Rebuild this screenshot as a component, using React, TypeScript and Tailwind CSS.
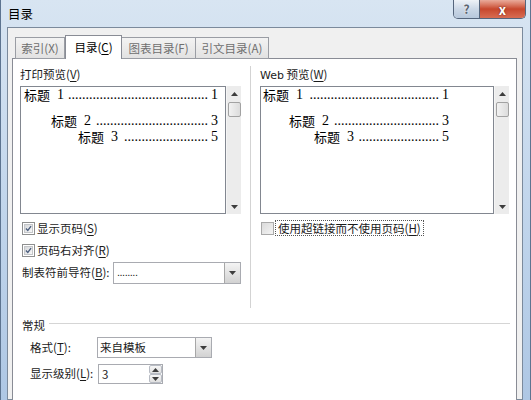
import React from "react";

const cjk = "font-['Noto_Sans_CJK_SC','Microsoft_YaHei',sans-serif]";
const serif = "font-['Liberation_Serif','Times_New_Roman',serif]";

function Acc({ k }: { k: string }) {
  return (
    <>
      (<span className="underline underline-offset-[2px] decoration-[1px]">{k}</span>)
    </>
  );
}

function Check({ checked }: { checked: boolean }) {
  return (
    <span className="w-[13px] h-[13px] shrink-0 border border-[#8e8f8f] bg-white p-px">
      <span className="w-full h-full flex items-center justify-center border border-[#c4c6c9] bg-gradient-to-br from-[#d6d8db] to-[#f7f7f7]">
        {checked && (
          <svg width="9" height="9" viewBox="0 0 9 9">
            <path d="M1.2 4.6 L3.6 7 L7.8 1.4" fill="none" stroke="#4a5d7d" strokeWidth="1.7" />
          </svg>
        )}
      </span>
    </span>
  );
}

function Arrow({ up }: { up?: boolean }) {
  return (
    <svg width="7" height="4" viewBox="0 0 7 4">
      <path d={up ? "M0 4 L3.5 0 L7 4 Z" : "M0 0 L7 0 L3.5 4 Z"} fill="#3d3d3d" />
    </svg>
  );
}

function Scrollbar() {
  return (
    <div className="w-[15px] h-[128px] flex flex-col items-center bg-[#ececec] border-l border-[#f5f5f5]">
      <div className="h-[15px] flex items-center justify-center">
        <Arrow up />
      </div>
      <div className="mt-[1px] w-[13px] h-[15px] rounded-[2px] border border-[#a2a2a2] bg-gradient-to-r from-[#f2f2f2] to-[#dcdcdc]" />
      <div className="flex-1" />
      <div className="h-[15px] flex items-center justify-center">
        <Arrow />
      </div>
    </div>
  );
}

function TocLine({ n, page, dots, cls, numGap }: { n: string; page: string; dots: number; cls: string; numGap: string }) {
  return (
    <div className={`flex items-center h-[16px] ${cls}`}>
      <span className={`${cjk} text-[13px] leading-[16px]`}>标题</span>
      <span className={`${serif} text-[14px] leading-[16px] ml-[7px]`}>{n}</span>
      <span className={`flex-1 flex justify-end overflow-hidden ${numGap}`}>
        <span className={`${serif} text-[14px] leading-[16px] whitespace-nowrap`}>{".".repeat(dots)}</span>
      </span>
      <span className={`${serif} text-[14px] leading-[16px] ml-[3px]`}>{page}</span>
    </div>
  );
}

function DropBtn() {
  return (
    <div className="w-[16px] h-full flex items-center justify-center border-l border-[#a7a7a7] bg-gradient-to-b from-[#f4f4f4] to-[#d2d2d2]">
      <Arrow />
    </div>
  );
}

export default function App() {
  return (
    <div
      className={`w-[531px] h-[400px] overflow-hidden border-x border-[#5d7490] bg-gradient-to-b from-[#d8e5f2] via-[#c2d6ec] to-[#aec7e4] ${cjk} text-[11.5px] text-[#1b1b1b] whitespace-nowrap`}
    >
      {/* title bar */}
      <div className="h-[27px] flex items-start">
        <span className="ml-[7px] mt-[5px] text-[12.5px] leading-[18px] text-black">目录</span>
        <div className="ml-auto mr-[4px] flex rounded-b-[5px] overflow-hidden border border-t-0 border-[#55657c]">
          <div className="w-[26px] h-[18px] flex items-center justify-center border-r border-[#55657c] bg-gradient-to-b from-[#eef2f7] via-[#cbd7e6] to-[#b7c8dc] text-[12px] font-bold text-[#5b6470] [text-shadow:0_0_2px_#fff]">
            ?
          </div>
          <div className="w-[45px] h-[18px] flex items-center justify-center bg-gradient-to-b from-[#e9ab9b] via-[#c7472d] to-[#d86c52] text-[13px] font-bold text-white leading-none [text-shadow:0_0_2px_#5a1a10]">
            x
          </div>
        </div>
      </div>

      {/* dialog body */}
      <div className="ml-[6px] w-[516px] h-[373px] border border-[#7b8a9c] bg-[#f0f0f0] pt-[7px]">
        {/* tabs */}
        <div className="relative z-10 -mb-px ml-[7px] h-[24px] flex items-end">
          <div className="w-[50px] h-[22px] pt-[2px] flex items-center justify-center border border-[#9a9da4] bg-gradient-to-b from-[#f3f3f3] to-[#e2e2e2] text-[#6f6f6f]">
            索引(X)
          </div>
          <div className="w-[57px] h-[24px] flex items-center justify-center border border-b-0 border-[#898c95] bg-white text-black">
            目录<Acc k="C" />
          </div>
          <div className="w-[74px] h-[22px] pt-[2px] flex items-center justify-center border border-l-0 border-[#9a9da4] bg-gradient-to-b from-[#f3f3f3] to-[#e2e2e2] text-[#6f6f6f]">
            图表目录(F)
          </div>
          <div className="w-[73px] h-[22px] pt-[2px] flex items-center justify-center border border-l-0 border-[#9a9da4] bg-gradient-to-b from-[#f3f3f3] to-[#e2e2e2] text-[#6f6f6f]">
            引文目录(A)
          </div>
        </div>

        {/* tab panel */}
        <div className="ml-[4px] mr-[5px] h-[360px] border border-[#898c95] bg-white pt-[7px] pl-[7px] pr-[6px]">
          <div className="flex h-[242px]">
            {/* print preview */}
            <div className="w-[221px] flex flex-col">
              <div className="h-[16px] leading-[16px]">
                打印预览<Acc k="V" />
              </div>
              <div className="mt-[4px] flex">
                <div className="w-[206px] h-[128px] border border-[#828790] bg-white pl-[3px] pr-[7px] text-black">
                  <TocLine n="1" page="1" dots={40} cls="" numGap="ml-[1px]" />
                  <TocLine n="2" page="3" dots={32} cls="ml-[27px] mt-[10px]" numGap="ml-[4px]" />
                  <TocLine n="3" page="5" dots={24} cls="ml-[54px]" numGap="ml-[4px]" />
                </div>
                <Scrollbar />
              </div>
              <div className="mt-[6px] h-[16px] pl-[2px] flex items-center gap-[2px]">
                <Check checked />
                <span className="leading-[16px]">
                  显示页码<Acc k="S" />
                </span>
              </div>
              <div className="mt-[6px] h-[16px] pl-[2px] flex items-center gap-[2px]">
                <Check checked />
                <span className="leading-[16px]">
                  页码右对齐<Acc k="R" />
                </span>
              </div>
              <div className="mt-[4px] h-[22px] pl-[2px] flex items-center">
                <span className="w-[91px] shrink-0">
                  制表符前导符<Acc k="B" />:
                </span>
                <div className="w-[128px] h-[22px] flex border border-[#a9abb1] bg-white">
                  <span className="flex-1 pl-[3px] leading-[18px] tracking-[-0.5px] font-['Liberation_Sans',sans-serif] text-[11px]">
                    ........
                  </span>
                  <DropBtn />
                </div>
              </div>
            </div>

            {/* divider */}
            <div className="ml-[9px] w-px bg-[#d3d3d3]" />

            {/* web preview */}
            <div className="ml-[9px] w-[249px] flex flex-col">
              <div className="h-[16px] leading-[16px]">
                <span className="font-['DejaVu_Sans',sans-serif] text-[11px]">Web</span> 预览<Acc k="W" />
              </div>
              <div className="mt-[4px] flex">
                <div className="w-[234px] h-[128px] border border-[#828790] bg-white pl-[2px] pr-[44px] text-black">
                  <TocLine n="1" page="1" dots={37} cls="" numGap="ml-[1px]" />
                  <TocLine n="2" page="3" dots={30} cls="ml-[26px] mt-[10px]" numGap="ml-[1px]" />
                  <TocLine n="3" page="5" dots={23} cls="ml-[51px]" numGap="ml-[1px]" />
                </div>
                <Scrollbar />
              </div>
              <div className="mt-[6px] h-[16px] pl-[1px] flex items-center">
                <span className="w-[13px] h-[13px] shrink-0 border border-[#a9a9a9] bg-gradient-to-br from-[#dadada] to-[#f4f4f4]" />
                <span className="ml-px h-[16px] leading-[14px] px-[2px] border border-dotted border-[#555]">
                  使用超链接而不使用页码<Acc k="H" />
                </span>
              </div>
            </div>
          </div>

          {/* general */}
          <div className="mt-[9px] h-[16px] pl-[2px] flex items-center">
            <span className="leading-[16px]">常规</span>
            <div className="ml-[4px] mb-[4px] flex-1 h-px bg-[#d5d5d5]" />
          </div>
          <div className="mt-[4px] h-[21px] pl-[10px] flex items-center">
            <span className="w-[67px] shrink-0">
              格式<Acc k="T" />:
            </span>
            <div className="w-[115px] h-[21px] flex border border-[#a9abb1] bg-white">
              <span className="flex-1 pl-[2px] leading-[19px]">来自模板</span>
              <DropBtn />
            </div>
          </div>
          <div className="mt-[6px] h-[20px] pl-[10px] flex items-center">
            <span className="w-[68px] shrink-0">
              显示级别<Acc k="L" />:
            </span>
            <div className="w-[65px] h-[20px] flex border border-[#a9abb1] bg-white">
              <span className="flex-1 pl-[3px] leading-[18px]">3</span>
              <div className="w-[13px] h-full flex flex-col">
                <div className="flex-1 flex items-center justify-center border border-[#b8bcc4] rounded-[2px] bg-gradient-to-b from-[#f6f6f6] to-[#e0e0e0]">
                  <Arrow up />
                </div>
                <div className="flex-1 flex items-center justify-center border border-[#b8bcc4] rounded-[2px] bg-gradient-to-b from-[#f6f6f6] to-[#e0e0e0]">
                  <Arrow />
                </div>
              </div>
            </div>
          </div>
        </div>
      </div>
    </div>
  );
}
